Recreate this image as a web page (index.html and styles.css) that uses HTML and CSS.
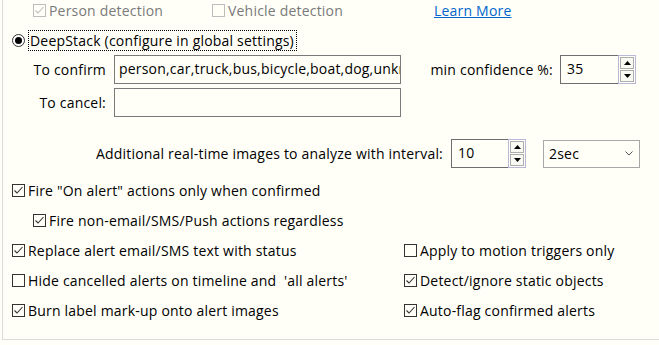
FILE: index.html
```html
<!DOCTYPE html>
<html lang="en">
<head>
    <meta charset="UTF-8">
    <title>AI settings</title>
    <link rel="stylesheet" href="styles.css">
</head>
<body>
    <div class="panel">
        <!-- detection types -->
        <div class="row row-top">
            <label class="check disabled person">
                <svg class="box" width="13" height="13" viewBox="0 0 13 13"><rect x="0.5" y="0.5" width="12" height="12"/><path d="M2.5 6.5 L5 9 L10.5 3"/></svg>
                Person detection
            </label>
            <label class="check disabled vehicle">
                <svg class="box" width="13" height="13" viewBox="0 0 13 13"><rect x="0.5" y="0.5" width="12" height="12"/></svg>
                Vehicle detection
            </label>
            <a class="link" href="#">Learn More</a>
        </div>

        <!-- deepstack -->
        <div class="row row-radio">
            <svg class="radio" width="13" height="13" viewBox="0 0 13 13"><circle cx="6.5" cy="6.5" r="6"/><circle class="dot" cx="6.5" cy="6.5" r="3.5"/></svg>
            <span class="focus">DeepStack (configure in global settings)</span>
        </div>

        <div class="row row-field">
            <span class="field-label">To confirm</span>
            <div class="textbox">person,car,truck,bus,bicycle,boat,dog,unknown</div>
            <span class="conf-label">min confidence %:</span>
            <div class="spin">
                <span class="spin-value">35</span>
                <span class="spin-buttons">
                    <span class="spin-btn"><svg width="7" height="4" viewBox="0 0 7 4"><path d="M3.5 0 L7 4 L0 4 Z"/></svg></span>
                    <span class="spin-btn"><svg width="7" height="4" viewBox="0 0 7 4"><path d="M0 0 L7 0 L3.5 4 Z"/></svg></span>
                </span>
            </div>
        </div>

        <div class="row row-field row-cancel">
            <span class="field-label">To cancel:</span>
            <div class="textbox"></div>
        </div>

        <div class="row row-interval">
            <span class="interval-label">Additional real-time images to analyze with interval:</span>
            <div class="spin">
                <span class="spin-value">10</span>
                <span class="spin-buttons">
                    <span class="spin-btn"><svg width="7" height="4" viewBox="0 0 7 4"><path d="M3.5 0 L7 4 L0 4 Z"/></svg></span>
                    <span class="spin-btn"><svg width="7" height="4" viewBox="0 0 7 4"><path d="M0 0 L7 0 L3.5 4 Z"/></svg></span>
                </span>
            </div>
            <div class="dropdown">
                <span>2sec</span>
                <svg width="8" height="5" viewBox="0 0 8 5"><path d="M0.5 0.5 L4 4 L7.5 0.5"/></svg>
            </div>
        </div>

        <!-- options -->
        <div class="options">
            <label class="check wide">
                <svg class="box" width="13" height="13" viewBox="0 0 13 13"><rect x="0.5" y="0.5" width="12" height="12"/><path d="M2.5 6.5 L5 9 L10.5 3"/></svg>
                Fire "On alert" actions only when confirmed
            </label>
            <label class="check wide indent">
                <svg class="box" width="13" height="13" viewBox="0 0 13 13"><rect x="0.5" y="0.5" width="12" height="12"/><path d="M2.5 6.5 L5 9 L10.5 3"/></svg>
                Fire non-email/SMS/Push actions regardless
            </label>
            <label class="check">
                <svg class="box" width="13" height="13" viewBox="0 0 13 13"><rect x="0.5" y="0.5" width="12" height="12"/><path d="M2.5 6.5 L5 9 L10.5 3"/></svg>
                Replace alert email/SMS text with status
            </label>
            <label class="check">
                <svg class="box" width="13" height="13" viewBox="0 0 13 13"><rect x="0.5" y="0.5" width="12" height="12"/></svg>
                Apply to motion triggers only
            </label>
            <label class="check">
                <svg class="box" width="13" height="13" viewBox="0 0 13 13"><rect x="0.5" y="0.5" width="12" height="12"/></svg>
                Hide cancelled alerts on timeline and &nbsp;'all alerts'
            </label>
            <label class="check">
                <svg class="box" width="13" height="13" viewBox="0 0 13 13"><rect x="0.5" y="0.5" width="12" height="12"/><path d="M2.5 6.5 L5 9 L10.5 3"/></svg>
                Detect/ignore static objects
            </label>
            <label class="check">
                <svg class="box" width="13" height="13" viewBox="0 0 13 13"><rect x="0.5" y="0.5" width="12" height="12"/><path d="M2.5 6.5 L5 9 L10.5 3"/></svg>
                Burn label mark-up onto alert images
            </label>
            <label class="check">
                <svg class="box" width="13" height="13" viewBox="0 0 13 13"><rect x="0.5" y="0.5" width="12" height="12"/><path d="M2.5 6.5 L5 9 L10.5 3"/></svg>
                Auto-flag confirmed alerts
            </label>
        </div>
    </div>
</body>
</html>
```

FILE: styles.css
```css
body {
    margin: 0;
    background-color: #fffff8;
    font-family: "Open Sans", "Noto Sans", sans-serif;
    font-size: 14px;
    letter-spacing: 0.2px;
    color: #000;
    overflow: hidden;
}

.panel {
    margin-left: 2px;
    height: 340px;
    border-left: 1px solid #dcdcd8;
    border-bottom: 1px solid #dcdcd8;
}

.row {
    display: flex;
    align-items: center;
    white-space: nowrap;
}

/* checkboxes */
.check {
    display: flex;
    align-items: center;
    gap: 3px;
    white-space: nowrap;
}

.check .box rect {
    fill: none;
    stroke: #333;
}

.check .box path {
    fill: none;
    stroke: #333;
    stroke-width: 1.1;
}

.check.disabled {
    color: #7a7a7a;
}

.check.disabled .box rect,
.check.disabled .box path {
    stroke: #bdbdbd;
}

.row-top {
    height: 22px;
    margin-top: -1px;
    padding-left: 30px;
}

.row-top .person {
    width: 179px;
}

.row-top .vehicle {
    width: 222px;
}

.link {
    color: #0066cc;
    text-decoration: underline;
}

/* radio */
.row-radio {
    height: 22px;
    margin-top: 8px;
    padding-left: 9px;
}

.radio circle {
    fill: #fff;
    stroke: #333;
}

.radio .dot {
    fill: #000;
    stroke: none;
}

.focus {
    margin-left: 3px;
    padding: 0 2px 0 1px;
    line-height: 19px;
    border: 1px dotted #000;
}

/* text fields */
.row-field {
    height: 29px;
    margin-top: 4px;
}

.row-cancel {
    margin-top: 4px;
}

.field-label {
    width: 103px;
    text-align: right;
}

.textbox {
    box-sizing: border-box;
    width: 287px;
    height: 29px;
    margin-left: 8px;
    padding: 2px 4px 4px;
    border: 1px solid #7a7a7a;
    overflow: hidden;
    line-height: 21px;
}

.conf-label {
    width: 152px;
    padding-right: 7px;
    text-align: right;
}

.spin {
    display: flex;
    box-sizing: border-box;
    width: 76px;
    height: 29px;
}

.spin-value {
    flex: 1;
    padding: 2px 6px 4px;
    line-height: 21px;
    border: 1px solid #6e6e6e;
    border-right: none;
}

.spin-buttons {
    display: flex;
    flex-direction: column;
    width: 18px;
    padding: 1px;
    gap: 1px;
    border: 1px solid #b8b8d8;
    box-sizing: border-box;
}

.spin-btn {
    flex: 1;
    display: flex;
    align-items: center;
    justify-content: center;
    border: 1px solid #adadad;
    background-color: #fafaf4;
}

.spin-btn path {
    fill: #000;
}

/* interval */
.row-interval {
    height: 29px;
    margin-top: 22px;
}

.interval-label {
    width: 440px;
    text-align: right;
}

.row-interval .spin {
    width: 75px;
    margin-left: 8px;
}

.dropdown {
    box-sizing: border-box;
    display: flex;
    align-items: center;
    justify-content: space-between;
    width: 97px;
    height: 28px;
    margin-left: 17px;
    padding: 0 6px 0 5px;
    border: 1px solid #a8a8a8;
}

.dropdown path {
    fill: none;
    stroke: #555;
}

/* option checkboxes */
.options {
    display: grid;
    grid-template-columns: 392px auto;
    grid-auto-rows: 30px;
    margin-top: 7px;
    padding-left: 9px;
}

.options .check.wide {
    grid-column: 1 / 3;
}

.options .check.indent {
    padding-left: 21px;
}
```
